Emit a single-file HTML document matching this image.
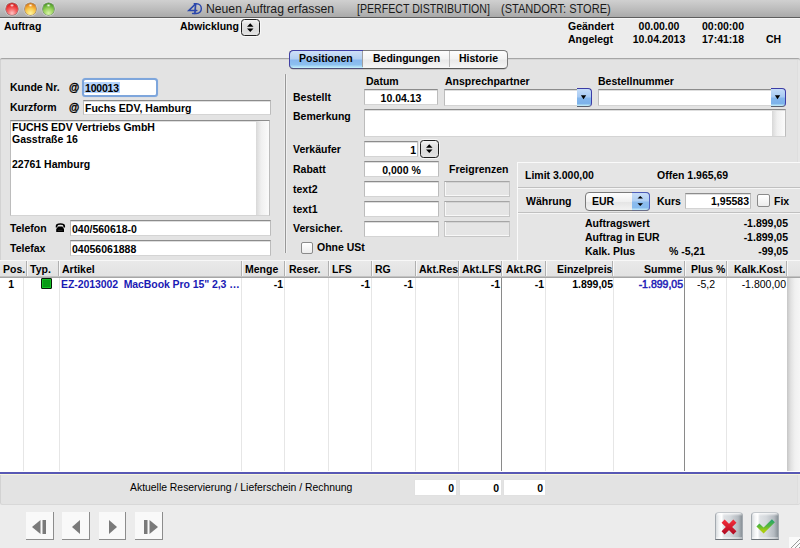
<!DOCTYPE html>
<html><head><meta charset="utf-8">
<style>
*{margin:0;padding:0;box-sizing:border-box}
html,body{width:800px;height:548px;overflow:hidden;background:#ececec;font-family:"Liberation Sans",sans-serif;font-size:10.5px;font-weight:bold;color:#000}
div{position:absolute}
.t{white-space:nowrap;line-height:12px}
.r{text-align:right}
.c{text-align:center}
.n{font-weight:normal}
.fld{background:#fff;border:1px solid #bcbcbc;border-top-color:#8c8c8c;border-bottom-color:#d4d4d4;box-shadow:inset 0 1px 0 #dedede}
.dis{background:#e5e5e5;border:1px solid #c6c6c6;border-top-color:#a6a6a6;box-shadow:inset 1px 0 0 #f8f8f8,inset 0 -1px 0 #f8f8f8,inset 0 1px 0 #d4d4d4}
.tl{top:2.8px;width:11.8px;height:11.8px;border-radius:50%}
.step{border:1.5px solid #1e1e1e;border-radius:3.5px;background:linear-gradient(#f4f4f4,#e2e2e2 30%,#dcdcdc 70%,#e4e4e4);box-shadow:0 0 0 1px rgba(255,255,255,.7)}
.sb{background:linear-gradient(90deg,#d8d8d8,#f0f0f0 40%,#fbfbfb)}
.hc{top:0;height:17px;border-right:1px solid #b4b4b4}
.bc{top:0;bottom:0;border-right:1px solid #e4e4e4}
.nav{width:27px;height:27px;background:#f9f9f9;box-shadow:1px 0 0 #8c8c8c,0 1px 0 #8c8c8c,1px 1px 0 #8c8c8c}
</style></head><body>

<!-- title bar -->
<div style="left:0;top:0;width:800px;height:18px;background:linear-gradient(#d0d0d0,#bababa 60%,#aaaaaa);border-bottom:1px solid #5e5e5e"></div>
<div style="left:0;top:18px;width:800px;height:1px;background:#f6f6f6"></div>
<div class="tl" style="left:6px;background:radial-gradient(ellipse 2.2px 1.6px at 50% 20%,rgba(255,255,255,.95),rgba(255,255,255,0)),radial-gradient(circle at 50% 85%,#ffc4c4 0,#f46060 40%,#e83030 65%,#a81818 100%);box-shadow:0 0 0 0.6px rgba(110,40,40,.7),0 0 0 1.5px rgba(230,230,230,.5)"></div>
<div class="tl" style="left:24.5px;background:radial-gradient(ellipse 2.2px 1.6px at 50% 20%,rgba(255,255,255,.95),rgba(255,255,255,0)),radial-gradient(circle at 50% 85%,#fff4a0 0,#f8cc50 40%,#ee9a28 65%,#b05a10 100%);box-shadow:0 0 0 0.6px rgba(120,70,20,.7),0 0 0 1.5px rgba(230,230,230,.5)"></div>
<div class="tl" style="left:42.5px;background:radial-gradient(ellipse 2.2px 1.6px at 50% 20%,rgba(255,255,255,.95),rgba(255,255,255,0)),radial-gradient(circle at 50% 85%,#d8f4a8 0,#9cd460 40%,#6cb43c 65%,#2e7a10 100%);box-shadow:0 0 0 0.6px rgba(40,90,30,.7),0 0 0 1.5px rgba(230,230,230,.5)"></div>
<svg style="position:absolute;left:182px;top:0" width="24" height="17"><g fill="none" stroke="#2b47ac" stroke-linecap="round">
<path d="M13.6 3.9 L6.8 10.4 L14.8 10.4" stroke-width="1.5"/>
<path d="M13.6 4 L12.9 13.4" stroke-width="1.7"/>
<path d="M12.2 3.8 L14.5 3.8 C20.8 3.8 21.2 13.5 14.2 13.5 L10.6 13.5" stroke-width="1.4"/>
</g></svg>
<div class="t n" style="left:206px;top:2px;font-size:12.2px;line-height:14px;color:#1a1a1a">Neuen Auftrag erfassen</div>
<div class="t n" style="left:357px;top:2px;font-size:12.2px;line-height:14px;color:#1a1a1a;transform:scaleX(0.87);transform-origin:0 0">[PERFECT DISTRIBUTION]</div>
<div class="t n" style="left:501px;top:2px;font-size:12.2px;line-height:14px;color:#1a1a1a;transform:scaleX(0.905);transform-origin:0 0">(STANDORT: STORE)</div>

<!-- header -->
<div class="t" style="left:4px;top:20px">Auftrag</div>
<div class="t" style="left:180px;top:20px">Abwicklung</div>
<div class="step" style="left:241px;top:19px;width:19px;height:17px"></div>
<svg style="position:absolute;left:241px;top:19px" width="19" height="17"><path d="M6 7.7 L12.5 7.7 L9.25 4.2 Z M6 9.5 L12.5 9.5 L9.25 13 Z" fill="#000"/></svg>
<div class="t" style="left:568px;top:20px">Geändert</div>
<div class="t" style="left:568px;top:33px">Angelegt</div>
<div class="t c" style="left:619px;width:80px;top:20px">00.00.00</div>
<div class="t c" style="left:619px;width:80px;top:33px">10.04.2013</div>
<div class="t" style="left:702px;top:20px">00:00:00</div>
<div class="t" style="left:702px;top:33px">17:41:18</div>
<div class="t" style="left:766px;top:33px">CH</div>

<!-- tab panel -->
<div style="left:0;top:58px;width:800px;height:447px;background:#e3e3e3;border-top:1px solid #a6a6a6;border-radius:2px;border-bottom:1px solid #d8d8d8;box-shadow:inset 1px 0 0 #d2d2d2,inset 0 1px 0 #d6d6d6,inset -2px 0 0 #e6e6e6,inset -3px 0 0 #dedede"></div>
<!-- tabs -->
<div style="left:289px;top:50px;width:219px;height:19px;border:1px solid #7a7a7a;border-bottom-color:#5a5a5a;border-radius:4.5px;background:linear-gradient(#fdfdfd,#f3f3f3 45%,#e9e9e9 55%,#f6f6f6);box-shadow:0 0.5px 0.5px rgba(0,0,0,.25)"></div>
<div style="left:289px;top:50px;width:74px;height:19px;border:1px solid #4040a6;border-right:0;border-bottom-color:#50507a;border-radius:4.5px 0 0 4.5px;background:linear-gradient(#cfe0f7,#b4d0f2 45%,#88b8ee 55%,#8cc0f0 80%,#c6f2fc)"></div>
<div style="left:362px;top:51px;width:1px;height:16px;background:#a0a0a0"></div>
<div style="left:449px;top:51px;width:1px;height:16px;background:#b8b8b8"></div>
<div class="t" style="left:299px;top:52px">Positionen</div>
<div class="t" style="left:373px;top:52px">Bedingungen</div>
<div class="t" style="left:459px;top:52px">Historie</div>

<!-- left section -->
<div class="t" style="left:10px;top:81px">Kunde Nr.</div>
<div class="t" style="left:69px;top:81px;-webkit-text-stroke:0.35px #000">@</div>
<div style="left:82px;top:78px;width:76px;height:18.5px;border:2.5px solid #7ea6dc;border-radius:3.5px;background:#fff;box-shadow:0 0 1px #a8c4ec"></div>
<div style="left:84px;top:82px;width:36px;height:11px;background:#b4d3fc"></div>
<div class="t" style="left:85px;top:82px;letter-spacing:-0.2px">100013</div>

<div class="t" style="left:10px;top:101px">Kurzform</div>
<div class="t" style="left:69px;top:101px;-webkit-text-stroke:0.35px #000">@</div>
<div class="fld" style="left:83px;top:100px;width:188px;height:15px"></div>
<div class="t" style="left:85px;top:102px">Fuchs EDV, Hamburg</div>

<div class="fld" style="left:10px;top:120px;width:260px;height:96px"></div>
<div class="sb" style="left:256px;top:121px;width:13px;height:94px"></div>
<div class="t" style="left:12px;top:121px;line-height:12.2px">FUCHS EDV Vertriebs GmbH<br>Gasstraße 16<br><br>22761 Hamburg</div>

<div class="t" style="left:10px;top:222px">Telefon</div>
<svg style="position:absolute;left:52px;top:220px" width="16" height="16"><path d="M4.6 7.6 L4.6 6 C4.6 4.4 6.2 4 8.4 4 C10.6 4 12.2 4.4 12.2 6 L12.2 7.6" stroke="#000" stroke-width="1.7" fill="none"/><path d="M4.2 12 L4.2 9 L6.4 6.4 L10.4 6.4 L12 9 L12 12 Z" fill="#000"/><path d="M6 10.4 L10.5 10.4" stroke="#444" stroke-width="0.6"/></svg>
<div class="fld" style="left:70px;top:220px;width:201px;height:16px"></div>
<div class="t" style="left:72px;top:223px">040/560618-0</div>
<div class="t" style="left:10px;top:242px">Telefax</div>
<div class="fld" style="left:70px;top:240px;width:201px;height:16px"></div>
<div class="t" style="left:72px;top:243px">04056061888</div>

<!-- vertical divider -->
<div style="left:284px;top:74px;width:3px;height:179px;border-radius:1.5px 1.5px 0 0;background:linear-gradient(90deg,#ececec 33.3%,#989898 33.3%,#989898 66.6%,#efefef 66.6%)"></div>

<!-- middle section -->
<div class="t" style="left:366px;top:75px">Datum</div>
<div class="t" style="left:445px;top:75px">Ansprechpartner</div>
<div class="t" style="left:598px;top:75px">Bestellnummer</div>
<div class="t" style="left:293px;top:91px">Bestellt</div>
<div class="fld" style="left:364px;top:89px;width:74px;height:16px"></div>
<div class="t c" style="left:364px;width:74px;top:92px">10.04.13</div>

<div class="fld" style="left:444px;top:89px;width:134px;height:17px"></div>
<div style="left:577px;top:88px;width:15px;height:19px;border:1px solid #3c3ca6;border-left:0;border-bottom-color:#5c6070;border-radius:0 4px 4px 0;background:linear-gradient(#c4dcf8,#a8cbf3 45%,#84b6ec 55%,#7cb2ea 85%,#c8f0f8)"></div>
<svg style="position:absolute;left:577px;top:88px" width="15" height="19"><path d="M3.9 7.2 L9.2 7.2 L6.5 11.2 Z" fill="#000"/></svg>
<div class="fld" style="left:598px;top:89px;width:175px;height:17px"></div>
<div style="left:771px;top:88px;width:15px;height:19px;border:1px solid #3c3ca6;border-left:0;border-bottom-color:#5c6070;border-radius:0 4px 4px 0;background:linear-gradient(#c4dcf8,#a8cbf3 45%,#84b6ec 55%,#7cb2ea 85%,#c8f0f8)"></div>
<svg style="position:absolute;left:771px;top:88px" width="15" height="19"><path d="M3.9 7.2 L9.2 7.2 L6.5 11.2 Z" fill="#000"/></svg>

<div class="t" style="left:293px;top:110px">Bemerkung</div>
<div class="fld" style="left:364px;top:109px;width:422px;height:28px"></div>
<div class="sb" style="left:772px;top:111px;width:13px;height:25px"></div>

<div class="t" style="left:293px;top:143px">Verkäufer</div>
<div class="fld" style="left:364px;top:141px;width:54px;height:16px"></div>
<div class="t r" style="left:364px;width:52px;top:144px">1</div>
<div class="step" style="left:420px;top:140px;width:19px;height:17.5px"></div>
<svg style="position:absolute;left:420px;top:140px" width="19" height="17"><path d="M6 7.7 L12.5 7.7 L9.25 4.2 Z M6 9.5 L12.5 9.5 L9.25 13 Z" fill="#000"/></svg>

<div class="t" style="left:293px;top:163px">Rabatt</div>
<div class="fld" style="left:364px;top:161px;width:75px;height:16px"></div>
<div class="t c" style="left:364px;width:75px;top:164px">0,000 %</div>
<div class="t" style="left:449px;top:163px">Freigrenzen</div>

<div class="t" style="left:293px;top:183px">text2</div>
<div class="fld" style="left:364px;top:181px;width:75px;height:16px"></div>
<div class="dis" style="left:444px;top:181px;width:66px;height:16px"></div>
<div class="t" style="left:293px;top:203px">text1</div>
<div class="fld" style="left:364px;top:201px;width:75px;height:16px"></div>
<div class="dis" style="left:444px;top:201px;width:66px;height:16px"></div>
<div class="t" style="left:293px;top:222px">Versicher.</div>
<div class="fld" style="left:364px;top:221px;width:75px;height:16px"></div>
<div class="dis" style="left:444px;top:221px;width:66px;height:16px"></div>

<div style="left:301px;top:242px;width:12px;height:12px;border:1px solid #8a8a8a;border-radius:2px;background:linear-gradient(#fff,#ececec)"></div>
<div class="t" style="left:317px;top:241px">Ohne USt</div>

<!-- right info panel -->
<div style="left:517px;top:162px;width:283px;height:98px;border-left:1px solid #fafafa;border-top:1px solid #fafafa;background:#e5e5e5"></div>
<div style="left:518px;top:187px;width:282px;height:2px;background:linear-gradient(#c0c0c0 50%,#f6f6f6 50%)"></div>
<div style="left:518px;top:212px;width:282px;height:2px;background:linear-gradient(#c0c0c0 50%,#f6f6f6 50%)"></div>
<div class="t" style="left:525px;top:169px">Limit 3.000,00</div>
<div class="t" style="left:657px;top:169px">Offen 1.965,69</div>
<div class="t" style="left:526px;top:195px">Währung</div>
<div style="left:585px;top:192px;width:65px;height:19px;border:1px solid #7a7a7a;border-radius:4px;background:linear-gradient(#fefefe,#f0f0f0 50%,#e4e4e4 51%,#f2f2f2)"></div>
<div style="left:632px;top:192px;width:18px;height:19px;border:1px solid #4e5cb8;border-left:0;border-bottom-color:#6a6e88;border-radius:0 4px 4px 0;background:linear-gradient(#c8ddf8,#b0cff3 45%,#8cbcee 55%,#86baee 85%,#c6ecfa)"></div>
<div class="t" style="left:592px;top:195px">EUR</div>
<svg style="position:absolute;left:632px;top:192px" width="18" height="19"><path d="M5.5 6.6 L11 6.6 L8.25 3.9 Z M5.5 11.3 L11 11.3 L8.25 14 Z" fill="#000"/></svg>
<div class="t" style="left:657px;top:195px">Kurs</div>
<div class="fld" style="left:685px;top:193px;width:66px;height:16px"></div>
<div class="t r" style="left:685px;width:64px;top:195px">1,95583</div>
<div style="left:757px;top:194px;width:13px;height:13px;border:1px solid #8a8a8a;border-radius:2px;background:linear-gradient(#fff,#ececec)"></div>
<div class="t" style="left:774px;top:195px">Fix</div>

<div class="t" style="left:585px;top:217px">Auftragswert</div>
<div class="t r" style="left:700px;width:88px;top:217px">-1.899,05</div>
<div class="t" style="left:585px;top:231px">Auftrag in EUR</div>
<div class="t r" style="left:700px;width:88px;top:231px">-1.899,05</div>
<div class="t" style="left:585px;top:245px">Kalk. Plus</div>
<div class="t" style="left:669px;top:245px">% -5,21</div>
<div class="t r" style="left:700px;width:88px;top:245px">-99,05</div>

<!-- table -->
<div style="left:0;top:260px;width:800px;height:18px;background:linear-gradient(#f8f8f8 1px,#e9e9e9 1px,#e2e2e2 16px,#c2c2c2 16px,#c2c2c2 17px,#a6a6a6 17px)"></div>
<div style="left:0;top:278px;width:800px;height:194px;background:#fff"></div>
<div style="left:787px;top:278px;width:13px;height:193px;background:linear-gradient(90deg,#c6c6c6,#e2e2e2 30%,#f0f0f0 60%,#f6f6f6)"></div>
<div style="left:0;top:472px;width:800px;height:3px;background:linear-gradient(#5858b4 67%,#f6f6dc 67%)"></div>

<div class="t" style="left:3px;top:263px">Pos.</div>
<div class="t" style="left:30px;top:263px">Typ.</div>
<div class="t" style="left:62px;top:263px">Artikel</div>
<div class="t" style="left:245px;top:263px">Menge</div>
<div class="t" style="left:289px;top:263px">Reser.</div>
<div class="t" style="left:332px;top:263px">LFS</div>
<div class="t" style="left:375px;top:263px">RG</div>
<div class="t" style="left:419px;top:263px">Akt.Res</div>
<div class="t" style="left:462px;top:263px">Akt.LFS</div>
<div class="t" style="left:506px;top:263px">Akt.RG</div>
<div class="t" style="left:557px;top:263px">Einzelpreis</div>
<div class="t r" style="left:612px;width:70px;top:263px">Summe</div>
<div class="t" style="left:691px;top:263px">Plus %</div>
<div class="t" style="left:734px;top:263px">Kalk.Kost.</div>

<!-- header dividers -->
<div style="left:26px;top:261px;width:2px;height:15px;background:linear-gradient(90deg,#b0b0b0 50%,#f8f8f8 50%)"></div>
<div style="left:58px;top:261px;width:2px;height:15px;background:linear-gradient(90deg,#b0b0b0 50%,#f8f8f8 50%)"></div>
<div style="left:241px;top:261px;width:2px;height:15px;background:linear-gradient(90deg,#b0b0b0 50%,#f8f8f8 50%)"></div>
<div style="left:284px;top:261px;width:2px;height:15px;background:linear-gradient(90deg,#b0b0b0 50%,#f8f8f8 50%)"></div>
<div style="left:328px;top:261px;width:2px;height:15px;background:linear-gradient(90deg,#b0b0b0 50%,#f8f8f8 50%)"></div>
<div style="left:371px;top:261px;width:2px;height:15px;background:linear-gradient(90deg,#b0b0b0 50%,#f8f8f8 50%)"></div>
<div style="left:415px;top:261px;width:2px;height:15px;background:linear-gradient(90deg,#b0b0b0 50%,#f8f8f8 50%)"></div>
<div style="left:458px;top:261px;width:2px;height:15px;background:linear-gradient(90deg,#b0b0b0 50%,#f8f8f8 50%)"></div>
<div style="left:501px;top:261px;width:2px;height:15px;background:linear-gradient(90deg,#b0b0b0 50%,#f8f8f8 50%)"></div>
<div style="left:545px;top:261px;width:2px;height:15px;background:linear-gradient(90deg,#b0b0b0 50%,#f8f8f8 50%)"></div>
<div style="left:612px;top:261px;width:2px;height:15px;background:linear-gradient(90deg,#b0b0b0 50%,#f8f8f8 50%)"></div>
<div style="left:684px;top:261px;width:2px;height:15px;background:linear-gradient(90deg,#b0b0b0 50%,#f8f8f8 50%)"></div>
<div style="left:726px;top:261px;width:2px;height:15px;background:linear-gradient(90deg,#b0b0b0 50%,#f8f8f8 50%)"></div>
<div style="left:786px;top:261px;width:2px;height:15px;background:linear-gradient(90deg,#b0b0b0 50%,#f8f8f8 50%)"></div>

<!-- body dividers -->
<div style="left:23px;top:278px;width:1px;height:193px;background:#e6e6e6"></div>
<div style="left:59px;top:278px;width:1px;height:193px;background:#e6e6e6"></div>
<div style="left:241px;top:278px;width:1px;height:193px;background:#e6e6e6"></div>
<div style="left:284px;top:278px;width:1px;height:193px;background:#e6e6e6"></div>
<div style="left:328px;top:278px;width:1px;height:193px;background:#e6e6e6"></div>
<div style="left:371px;top:278px;width:1px;height:193px;background:#e6e6e6"></div>
<div style="left:415px;top:278px;width:1px;height:193px;background:#e6e6e6"></div>
<div style="left:458px;top:278px;width:1px;height:193px;background:#e6e6e6"></div>
<div style="left:501px;top:278px;width:1px;height:193px;background:#8a8a8a"></div>
<div style="left:545px;top:278px;width:1px;height:193px;background:#e6e6e6"></div>
<div style="left:613px;top:278px;width:1px;height:193px;background:#e6e6e6"></div>
<div style="left:684px;top:278px;width:1px;height:193px;background:#8a8a8a"></div>
<div style="left:726px;top:278px;width:1px;height:193px;background:#e6e6e6"></div>

<!-- row 1 -->
<div class="t r" style="left:0;width:14px;top:278px">1</div>
<div style="left:41px;top:278px;width:11px;height:11.3px;background:#089a14;border:1px solid #0a1a0a;border-radius:1px;box-shadow:inset 0 0 0 1px #14c024"></div>
<div class="t" style="left:61px;top:278px;color:#1a1ab4;letter-spacing:-0.08px">EZ-2013002&nbsp;&nbsp;MacBook Pro 15" 2,3 …</div>
<div class="t r" style="left:242px;width:41px;top:278px">-1</div>
<div class="t r" style="left:330px;width:40px;top:278px">-1</div>
<div class="t r" style="left:373px;width:40px;top:278px">-1</div>
<div class="t r" style="left:460px;width:40px;top:278px">-1</div>
<div class="t r" style="left:503px;width:41px;top:278px">-1</div>
<div class="t r" style="left:547px;width:66px;top:278px">1.899,05</div>
<div class="t r n" style="left:615px;width:68px;top:278px;color:#2222b6;-webkit-text-stroke:0.5px #2222b6">-1.899,05</div>
<div class="t n" style="left:697px;top:278px">-5,2</div>
<div class="t r n" style="left:728px;width:58px;top:278px">-1.800,00</div>

<!-- summary -->
<div class="t n" style="left:130px;top:482px;font-size:10.4px">Aktuelle Reservierung / Lieferschein / Rechnung</div>
<div style="left:415px;top:480px;width:41px;height:15px;background:#fff;box-shadow:0 0 0 0.5px #e0e0e0"></div>
<div class="t r" style="left:415px;width:39px;top:482px">0</div>
<div style="left:460px;top:480px;width:41px;height:15px;background:#fff;box-shadow:0 0 0 0.5px #e0e0e0"></div>
<div class="t r" style="left:460px;width:39px;top:482px">0</div>
<div style="left:504px;top:480px;width:41px;height:15px;background:#fff;box-shadow:0 0 0 0.5px #e0e0e0"></div>
<div class="t r" style="left:504px;width:39px;top:482px">0</div>

<!-- nav buttons -->
<div class="nav" style="left:26px;top:512px"></div>
<div class="nav" style="left:62px;top:512px"></div>
<div class="nav" style="left:99px;top:512px;width:26px"></div>
<div class="nav" style="left:135px;top:512px"></div>
<svg style="position:absolute;left:0;top:505px" width="170" height="40">
<g fill="#7a7a7a">
<path d="M32 22 L40.5 15 L40.5 29 Z"/><rect x="42.5" y="15" width="3.5" height="14"/>
<path d="M72 22 L80 15 L80 29 Z"/>
<path d="M117 22 L109 15 L109 29 Z"/>
<rect x="144" y="15" width="3.5" height="14"/><path d="M158 22 L149.5 15 L149.5 29 Z"/>
</g></svg>

<!-- ok/cancel -->
<div style="left:715px;top:512px;width:28px;height:28px;border:1px solid #a4aab0;border-top-color:#c4c8cc;border-bottom-color:#6c7278;border-radius:4px 4px 0 0;background:linear-gradient(rgba(255,255,255,.85),rgba(255,255,255,0) 3px,rgba(255,255,255,0) 24px,rgba(255,255,255,.7) 25px,rgba(255,255,255,0) 26px),linear-gradient(90deg,#d8dcdf,#f4f5f6 12%,#ffffff 22%,#dfe2e5 30%,#d4d8dc 55%,#b4bac0 85%,#8a9298)"></div>
<div style="left:751px;top:512px;width:28px;height:28px;border:1px solid #a4aab0;border-top-color:#c4c8cc;border-bottom-color:#6c7278;border-radius:4px 4px 0 0;background:linear-gradient(rgba(255,255,255,.85),rgba(255,255,255,0) 3px,rgba(255,255,255,0) 24px,rgba(255,255,255,.7) 25px,rgba(255,255,255,0) 26px),linear-gradient(90deg,#d8dcdf,#f4f5f6 12%,#ffffff 22%,#dfe2e5 30%,#d4d8dc 55%,#b4bac0 85%,#8a9298)"></div>
<svg style="position:absolute;left:715px;top:512px" width="70" height="30">
<defs><linearGradient id="rx" x1="0" y1="0" x2="0" y2="1"><stop offset="0" stop-color="#f02a38"/><stop offset="1" stop-color="#b40c24"/></linearGradient>
<linearGradient id="gc" x1="0" y1="0" x2="0" y2="1"><stop offset="0" stop-color="#2aa66a"/><stop offset="0.55" stop-color="#58b838"/><stop offset="1" stop-color="#a8cc10"/></linearGradient></defs>
<path d="M8.1 9.1 L19.9 20.9 M19.9 9.1 L8.1 20.9" stroke="url(#rx)" stroke-width="4.4" stroke-linecap="butt" fill="none"/>
<path d="M42.9 12.9 L48.6 18.6 L58.4 8.8" stroke="url(#gc)" stroke-width="4.2" stroke-linecap="butt" stroke-linejoin="miter" fill="none"/>
</svg>

<!-- resize grip -->
<div style="left:789px;top:537px;width:11px;height:11px;background:#fafafa"></div>
<svg style="position:absolute;left:789px;top:537px" width="11" height="11"><path d="M2 11 L11 2 M6 11 L11 6 M10 11 L11 10" stroke="#9a9a9a" stroke-width="1"/></svg>

</body></html>
